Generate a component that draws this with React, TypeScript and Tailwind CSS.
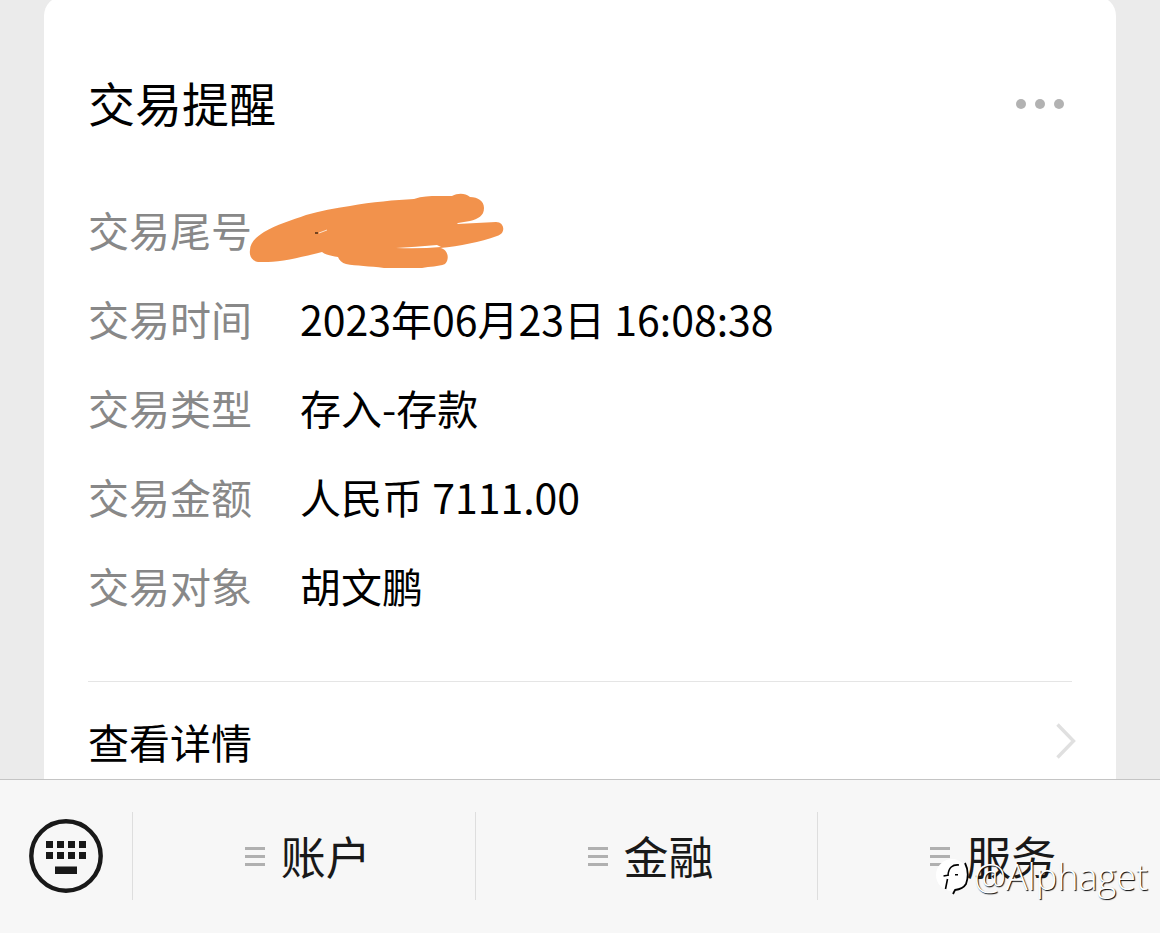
const rows = [
  { label: '交易尾号', value: null },
  { label: '交易时间', value: '2023年06月23日 16:08:38' },
  { label: '交易类型', value: '存入-存款' },
  { label: '交易金额', value: '人民币 7111.00' },
  { label: '交易对象', value: '胡文鹏' },
];

const menus = ['账户', '金融', '服务'];

function Scribble() {
  return (
    <svg className="h-[80px] w-[260px]" viewBox="246 190 260 80" aria-hidden="true">
      <path
        fill="#f2924c"
        d="M250 250C250 243 256 237 264 232C276 225 292 220 306 215C320 211 335 208 350 206C372 202 395 200 414 199C422 196 430 196 438 196L452 196C458 193 465 193 470 197C478 197 484 201 484 208C484 216 478 219 470 221L458 223L457 224L496 222C505 222 506 234 497 236C480 242 460 246 440 248C448 249 450 259 445 264C438 267 430 266 422 268L384 268C370 266 356 266 346 264C342 263 339 260 338 257C332 256 326 255 322 252C306 256 282 262 268 262L258 262C252 261 249 256 250 250Z"
      />
      <path fill="#fff" d="M396 248Q415 247 437 245L441 247Q420 249 396 248Z" />
      <path d="M319 233L327 230" stroke="#fbe3cf" strokeWidth="1" />
      <path d="M315 233L318 233" stroke="#4a2a10" strokeWidth="1.5" />
    </svg>
  );
}

function KeyboardIcon() {
  return (
    <svg className="h-[74px] w-[74px]" viewBox="0 0 74 74" fill="#191919" aria-hidden="true">
      <circle cx="37" cy="37" r="34.7" fill="none" stroke="#191919" strokeWidth="4.4" />
      {[17, 28, 39, 50].map((x) => (
        <g key={x}>
          <rect x={x} y="22" width="7" height="7" />
          <rect x={x} y="33" width="7" height="7" />
        </g>
      ))}
      <rect x="26" y="47.5" width="22" height="7.5" />
    </svg>
  );
}

function WatermarkLogo() {
  return (
    <svg className="h-9 w-9" viewBox="932 863 36 36" aria-hidden="true">
      <circle cx="950" cy="879" r="16" fill="#fff" />
      <path
        d="M963 867Q968 877 964 888Q961 893 953 894L951 898"
        fill="none"
        stroke="#000"
        strokeWidth="1.8"
      />
      <path
        d="M957 869Q947 868 946 879M941.5 880L947 879M953 878.7L956 878.7M945.5 883L943.5 893"
        fill="none"
        stroke="#000"
        strokeWidth="1.6"
      />
    </svg>
  );
}

export default function App() {
  return (
    <div className="flex min-h-screen flex-col overflow-hidden bg-[#ebebeb] font-['Noto_Sans_CJK_SC',sans-serif] text-black">
      <main className="flex flex-1 flex-col px-11">
        <article className="-mt-1 flex flex-1 flex-col rounded-t-[20px] bg-white px-11 pt-[76px]">
          <header className="flex items-center justify-between">
            <h1 className="text-[47px] leading-[60px]">交易提醒</h1>
            <button type="button" aria-label="更多" className="mr-2 flex gap-[9px] pt-1">
              <span className="size-[10px] rounded-full bg-[#b2b2b2]" />
              <span className="size-[10px] rounded-full bg-[#b2b2b2]" />
              <span className="size-[10px] rounded-full bg-[#b2b2b2]" />
            </button>
          </header>
          <dl className="border-b border-[#e5e5e5] pb-[51px] pt-[53px] text-[41px] leading-[89px]">
            {rows.map((row) => (
              <div key={row.label} className="flex">
                <dt className="w-[212px] shrink-0 text-[#888888]">{row.label}</dt>
                <dd className="relative">
                  {row.value ?? (
                    <span className="absolute -left-[54px] top-[5px] block leading-none">
                      <Scribble />
                    </span>
                  )}
                </dd>
              </div>
            ))}
          </dl>
          <a href="#details" className="flex items-center justify-between pt-[29px] text-[41px] leading-[60px]">
            查看详情
            <svg className="-mr-1 h-9 w-5" viewBox="0 0 20 36" fill="none" stroke="#e0e0e0" strokeWidth="3.4" aria-hidden="true">
              <path d="M1.5 1.5L17.5 18L1.5 34.5" />
            </svg>
          </a>
        </article>
      </main>

      <footer className="relative flex border-t border-[#c4c4c4] bg-[#f7f7f7] pb-[33px] pt-8 text-[#191919]">
        <button type="button" aria-label="键盘" className="flex w-[132px] items-center justify-center">
          <KeyboardIcon />
        </button>
        <nav className="flex flex-1">
          {menus.map((menu) => (
            <button
              key={menu}
              type="button"
              className="flex h-[88px] flex-1 items-center justify-center gap-4 border-l border-[#dedede] pl-2 text-[45px] leading-[60px]"
            >
              <span className="flex flex-col gap-[5px]" aria-hidden="true">
                <span className="h-[3px] w-5 bg-[#b0b0b0]" />
                <span className="h-[3px] w-5 bg-[#b0b0b0]" />
                <span className="h-[3px] w-5 bg-[#b0b0b0]" />
              </span>
              {menu}
            </button>
          ))}
        </nav>
        <div className="absolute bottom-[34px] right-3 flex items-center gap-1 text-white">
          <WatermarkLogo />
          <span className="font-['Open_Sans',sans-serif] text-[36px] font-light leading-[44px] [text-shadow:1px_1px_1px_#000]">
            @Alphaget
          </span>
        </div>
      </footer>
    </div>
  );
}
